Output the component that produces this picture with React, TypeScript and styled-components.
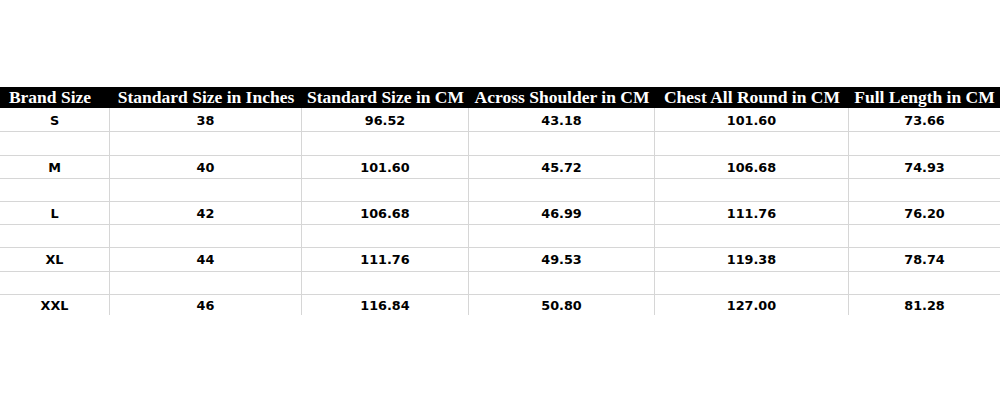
import React from 'react'
import styled, { createGlobalStyle } from 'styled-components'

const GlobalStyle = createGlobalStyle`
  html, body {
    margin: 0;
    padding: 0;
    background: #ffffff;
  }
`

const columns = '110px 192px 167px 186px 194px 151px'

const Page = styled.main`
  width: 1000px;
  height: 400px;
  padding-top: 87px;
  box-sizing: border-box;
  background: #ffffff;
`

const HeaderRow = styled.div`
  display: grid;
  grid-template-columns: ${columns};
  height: 21px;
  background: #000000;
`

const HeaderCell = styled.div<{ $shift?: number }>`
  display: flex;
  align-items: center;
  justify-content: center;
  white-space: nowrap;
  color: #ffffff;
  font-family: 'Liberation Serif', 'Times New Roman', serif;
  font-weight: 700;
  font-size: 17.5px;
  line-height: 21px;
  transform: translateX(${(p) => p.$shift ?? 0}px);
`

const Row = styled.div<{ $height: number; $last?: boolean }>`
  display: grid;
  grid-template-columns: ${columns};
  height: ${(p) => p.$height}px;
  box-sizing: border-box;
  border-bottom: ${(p) => (p.$last ? 'none' : '1px solid #d6d6d6')};
`

const Cell = styled.div<{ $edge?: boolean }>`
  display: flex;
  align-items: center;
  justify-content: center;
  padding-top: 1px;
  border-right: ${(p) => (p.$edge ? 'none' : '1px solid #d6d6d6')};
  color: #000000;
  font-family: 'DejaVu Sans', Verdana, sans-serif;
  font-weight: 700;
  font-size: 12.8px;
`

const headers = [
  'Brand Size',
  'Standard Size in Inches',
  'Standard Size in CM',
  'Across Shoulder in CM',
  'Chest All Round in CM',
  'Full Length in CM',
]

const sizes = [
  ['S', '38', '96.52', '43.18', '101.60', '73.66'],
  ['M', '40', '101.60', '45.72', '106.68', '74.93'],
  ['L', '42', '106.68', '46.99', '111.76', '76.20'],
  ['XL', '44', '111.76', '49.53', '119.38', '78.74'],
  ['XXL', '46', '116.84', '50.80', '127.00', '81.28'],
]

const App = () => {
  return (
    <>
      <GlobalStyle />
      <Page>
        <HeaderRow>
          {headers.map((h, i) => (
            <HeaderCell key={h} $shift={i === 0 ? -5 : 0}>
              {h}
            </HeaderCell>
          ))}
        </HeaderRow>
        {sizes.map((row, r) => {
          const last = r === sizes.length - 1
          return (
            <React.Fragment key={row[0]}>
              <Row $height={r === 0 ? 24.4 : last ? 20 : 23.2} $last={last}>
                {row.map((v, i) => (
                  <Cell key={i} $edge={i === row.length - 1}>
                    {v}
                  </Cell>
                ))}
              </Row>
              {/* blank spacer row between sizes */}
              {!last && (
                <Row $height={23.2}>
                  {row.map((_, i) => (
                    <Cell key={i} $edge={i === row.length - 1} />
                  ))}
                </Row>
              )}
            </React.Fragment>
          )
        })}
      </Page>
    </>
  )
}

export default App
